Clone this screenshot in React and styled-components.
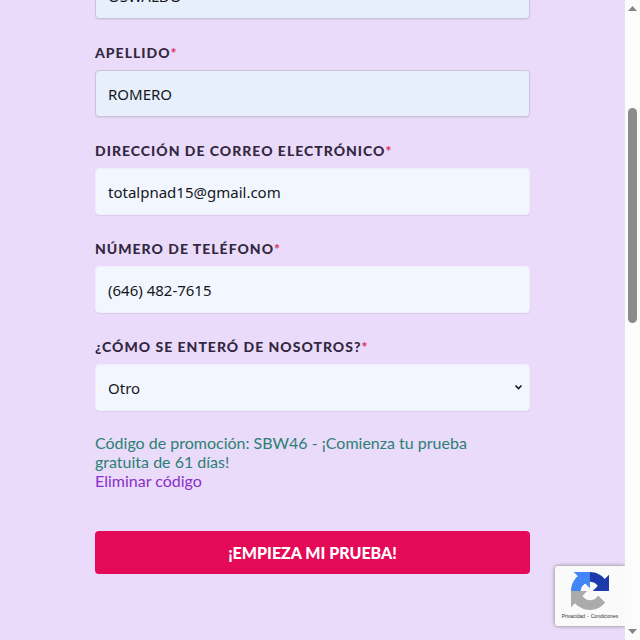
import React, { useState } from 'react';
import styled, { createGlobalStyle } from 'styled-components';

const GlobalStyle = createGlobalStyle`
  * {
    box-sizing: border-box;
  }

  body {
    margin: 0;
    background: #eadbfb;
    font-family: Lato, sans-serif;
  }
`;

const Page = styled.div`
  display: flex;
  height: 100vh;
  overflow: hidden;
`;

const Main = styled.main`
  position: relative;
  flex: 1;
  overflow: hidden;
`;

const Form = styled.form`
  width: 100%;
  max-width: 435px;
  margin: -28px auto 0;
`;

const Field = styled.div`
  & + & {
    margin-top: 24px;
  }
`;

const Label = styled.label`
  display: block;
  margin-bottom: 7px;
  color: #33283f;
  font-size: 14px;
  font-weight: 900;
  line-height: 20px;
  letter-spacing: 1px;
  text-transform: uppercase;
`;

const Required = styled.span`
  color: #dc3558;
`;

const Input = styled.input`
  display: block;
  width: 100%;
  height: 47px;
  padding: 0 12px;
  border: 1px solid ${(props) => (props.$filled ? '#c9c3dc' : '#f0eefc')};
  border-radius: 4px;
  background: ${(props) => (props.$filled ? '#e7effc' : '#f2f6ff')};
  box-shadow: 0 1px 1px #d9cdea;
  color: #15171c;
  font-family: 'Noto Sans', sans-serif;
  font-size: 15px;
  outline: none;
`;

const SelectBox = styled.div`
  position: relative;
`;

const Select = styled(Input)`
  appearance: none;
`;

const Chevron = styled.svg`
  position: absolute;
  top: 19px;
  right: 7px;
  width: 9px;
  height: 8px;
  pointer-events: none;
`;

const Promo = styled.div`
  margin: 22px 0 41px;
  color: #2b8072;
  font-size: 16px;
  line-height: 19px;
`;

const PromoText = styled.p`
  max-width: 400px;
  margin: 0;
`;

const PromoLink = styled.a`
  color: #8a2fc9;
  text-decoration: none;
`;

const SubmitButton = styled.button`
  display: block;
  width: 100%;
  height: 43px;
  border: 0;
  border-radius: 4px;
  background: #e50a58;
  color: #fff;
  font-family: Lato, sans-serif;
  font-size: 16px;
  font-weight: 900;
  text-transform: uppercase;
`;

const Badge = styled.aside`
  position: absolute;
  right: 0;
  bottom: 14px;
  display: flex;
  flex-direction: column;
  align-items: center;
  width: 70px;
  height: 60px;
  padding-top: 6px;
  border-radius: 3px 0 0 3px;
  background: #fafafa;
  box-shadow: 0 0 4px #808080;
`;

const BadgeLogo = styled.svg`
  width: 38px;
  height: 38px;
`;

const BadgeLinks = styled.div`
  display: flex;
  gap: 2px;
  margin-top: 2px;
  color: #333;
  font-family: 'Liberation Sans', Arial, sans-serif;
  font-size: 5px;
  line-height: 8px;
  white-space: nowrap;
`;

const BadgeLink = styled.a`
  color: inherit;
  text-decoration: none;
`;

const ScrollTrack = styled.div`
  display: grid;
  grid-template-rows: 17px 91fr 215fr 300fr 17px;
  justify-items: center;
  width: 15px;
  background: #fcfcfc;
`;

const ScrollArrow = styled.svg`
  grid-row: ${(props) => props.$row};
  align-self: center;
  width: 9px;
  height: 5px;
  fill: #858585;
`;

const ScrollThumb = styled.div`
  grid-row: 3;
  width: 9px;
  border-radius: 5px;
  background: #8b8b8b;
`;

const RecaptchaLogo = () => (
  <BadgeLogo viewBox="0 0 64 64" aria-hidden="true">
    <path
      fill="#1c3aa9"
      d="M64 31.955l-.033-1.37V4.687l-7.16 7.16C50.948 4.674 42.033.093 32.05.093c-10.4 0-19.622 4.96-25.458 12.64l11.736 11.86a15.55 15.55 0 0 1 4.754-5.334c2.05-1.6 4.952-2.906 8.968-2.906.485 0 .86.057 1.135.163 4.976.393 9.288 3.14 11.828 7.124l-8.307 8.307L64 31.953"
    />
    <path
      fill="#4285f4"
      d="M31.862.094l-1.37.033H4.594l7.16 7.16C4.58 13.147 0 22.06 0 32.046c0 10.4 4.96 19.622 12.64 25.458L24.5 45.768a15.55 15.55 0 0 1-5.334-4.754c-1.6-2.05-2.906-4.952-2.906-8.968 0-.485.057-.86.163-1.135.393-4.976 3.14-9.288 7.124-11.828l8.307 8.307L31.86.095"
    />
    <path
      fill="#ababab"
      d="M.001 32.045l.033 1.37v25.898l7.16-7.16c5.86 7.173 14.774 11.754 24.76 11.754 10.4 0 19.622-4.96 25.458-12.64l-11.736-11.86a15.55 15.55 0 0 1-4.754 5.334c-2.05 1.6-4.952 2.906-8.968 2.906-.485 0-.86-.057-1.135-.163-4.976-.393-9.288-3.14-11.828-7.124l8.307-8.307c-10.522.04-22.4.066-27.295-.005"
    />
  </BadgeLogo>
);

const App = () => {
  const [values, setValues] = useState({
    nombre: 'OSWALDO',
    apellido: 'ROMERO',
    correo: 'totalpnad15@gmail.com',
    telefono: '(646) 482-7615',
    origen: 'Otro',
  });

  const handleChange = (e) => {
    setValues({ ...values, [e.target.name]: e.target.value });
  };

  const handleSubmit = (e) => {
    e.preventDefault();
  };

  return (
    <Page>
      <GlobalStyle />
      <Main>
        <Form onSubmit={handleSubmit}>
          <Field>
            <Input
              $filled
              name="nombre"
              aria-label="Nombre"
              value={values.nombre}
              onChange={handleChange}
            />
          </Field>
          <Field>
            <Label htmlFor="apellido">Apellido<Required>*</Required></Label>
            <Input
              $filled
              id="apellido"
              name="apellido"
              value={values.apellido}
              onChange={handleChange}
            />
          </Field>
          <Field>
            <Label htmlFor="correo">Dirección de correo electrónico<Required>*</Required></Label>
            <Input
              type="email"
              id="correo"
              name="correo"
              value={values.correo}
              onChange={handleChange}
            />
          </Field>
          <Field>
            <Label htmlFor="telefono">Número de teléfono<Required>*</Required></Label>
            <Input
              type="tel"
              id="telefono"
              name="telefono"
              value={values.telefono}
              onChange={handleChange}
            />
          </Field>
          <Field>
            <Label htmlFor="origen">¿Cómo se enteró de nosotros?<Required>*</Required></Label>
            <SelectBox>
              <Select
                as="select"
                id="origen"
                name="origen"
                value={values.origen}
                onChange={handleChange}
              >
                <option value="Otro">Otro</option>
              </Select>
              <Chevron viewBox="0 0 9 8" aria-hidden="true">
                <path d="M1.5 2.5l3 3 3-3" fill="none" stroke="#15171c" strokeWidth="1.6" />
              </Chevron>
            </SelectBox>
          </Field>
          <Promo>
            <PromoText>
              Código de promoción: SBW46 - ¡Comienza tu prueba gratuita de 61 días!
            </PromoText>
            <PromoLink href="#eliminar">Eliminar código</PromoLink>
          </Promo>
          <SubmitButton type="submit">¡Empieza mi prueba!</SubmitButton>
        </Form>
        <Badge>
          <RecaptchaLogo />
          <BadgeLinks>
            <BadgeLink href="#privacidad">Privacidad</BadgeLink>
            <span>-</span>
            <BadgeLink href="#condiciones">Condiciones</BadgeLink>
          </BadgeLinks>
        </Badge>
      </Main>
      <ScrollTrack aria-hidden="true">
        <ScrollArrow $row={1} viewBox="0 0 9 5">
          <path d="M0 5L4.5 0L9 5z" />
        </ScrollArrow>
        <ScrollThumb />
        <ScrollArrow $row={5} viewBox="0 0 9 5">
          <path d="M0 0L4.5 5L9 0z" />
        </ScrollArrow>
      </ScrollTrack>
    </Page>
  );
};

export default App;
